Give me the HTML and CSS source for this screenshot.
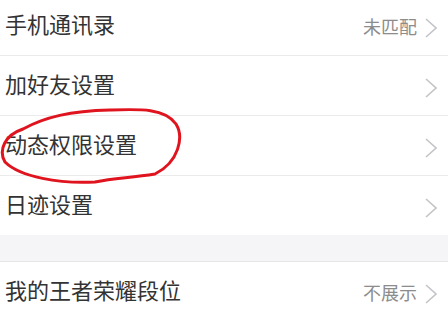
FILE: index.html
```html
<!DOCTYPE html>
<html>

<head>
    <meta name="viewport" content="width=device-width, initial-scale=1">
    <title>设置</title>
    <link rel="stylesheet" href="styles.css">
</head>

<body>
    <div class="list">
        <div class="row">
            <span class="label">手机通讯录</span>
            <span class="value">未匹配</span>
            <svg class="chevron" viewBox="0 0 12 20"><path d="M1 1 L11 10 L1 19"/></svg>
        </div>
        <div class="row">
            <span class="label">加好友设置</span>
            <svg class="chevron" viewBox="0 0 12 20"><path d="M1 1 L11 10 L1 19"/></svg>
        </div>
        <div class="row marked">
            <span class="label">动态权限设置</span>
            <svg class="chevron" viewBox="0 0 12 20"><path d="M1 1 L11 10 L1 19"/></svg>
            <svg class="circle" viewBox="0 0 190 80">
                <path d="M23 20 C45 8, 70 2, 110 1 C140 0, 165 -1, 176 15 C184 28, 179 53, 155 65 C130 69, 115 69, 95 73 C60 75, 20 68, 5 53 C-2 41, 5 26, 23 20"/>
            </svg>
        </div>
        <div class="row last">
            <span class="label">日迹设置</span>
            <svg class="chevron" viewBox="0 0 12 20"><path d="M1 1 L11 10 L1 19"/></svg>
        </div>
    </div>

    <div class="gap"></div>

    <div class="list bottom">
        <div class="row">
            <span class="label">我的王者荣耀段位</span>
            <span class="value">不展示</span>
            <svg class="chevron" viewBox="0 0 12 20"><path d="M1 1 L11 10 L1 19"/></svg>
        </div>
    </div>
</body>

</html>
```

FILE: styles.css
```css
body {
    margin: 0;
    padding: 0;
    background-color: #ffffff;
    font-family: "Noto Sans CJK SC", "Noto Sans", sans-serif;
    overflow: hidden;
}

.list {
    background-color: #ffffff;
    margin-top: -4px;
}

.list.bottom {
    margin-top: 0;
    border-top: 1px solid #e6e6e6;
}

.row {
    position: relative;
    display: flex;
    align-items: center;
    height: 59px;
    padding: 0 11px 0 5px;
    border-bottom: 1px solid #ebebeb;
}

.row.last {
    border-bottom: none;
}

.label {
    flex: 1;
    font-size: 22px;
    color: #333333;
    margin-bottom: 6px;
}

.value {
    font-size: 18px;
    color: #8c8c8c;
    margin-right: 8px;
}

.chevron {
    width: 12px;
    height: 20px;
    margin-top: 4px;
    fill: none;
    stroke: #c4c4c8;
    stroke-width: 1.6;
}

.gap {
    height: 26px;
    background-color: #f5f5f7;
}

.circle {
    position: absolute;
    left: 0;
    top: -7px;
    width: 190px;
    height: 80px;
    overflow: visible;
    fill: none;
    stroke: #e0141e;
    stroke-width: 3;
    stroke-linecap: round;
}
```
